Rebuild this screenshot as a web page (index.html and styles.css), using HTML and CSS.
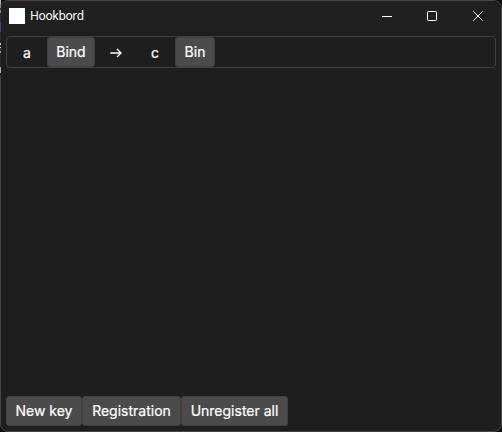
FILE: index.html
```html
<!DOCTYPE html>
<html lang="en">
<head>
<meta charset="utf-8">
<title>Hookbord</title>
<link rel="stylesheet" href="styles.css">
</head>
<body>
<div class="window">
  <header class="titlebar">
    <span class="app-icon"></span>
    <span class="title">Hookbord</span>
    <div class="controls">
      <svg width="10" height="10" viewBox="0 0 10 10"><path d="M0 5.5H10"/></svg>
      <svg width="10" height="10" viewBox="0 0 10 10"><rect x=".5" y=".5" width="9" height="9" rx=".8"/></svg>
      <svg width="10" height="10" viewBox="0 0 10 10"><path d="M.3 .3L9.7 9.7M9.7 .3L.3 9.7"/></svg>
    </div>
  </header>
  <main class="bindings">
    <div class="binding">
      <span class="key">a</span>
      <button class="btn">Bind</button>
      <svg class="arrow" width="12" height="10" viewBox="0 0 12 10"><path d="M.3 5H11M7 1L11 5L7 9"/></svg>
      <span class="key">c</span>
      <button class="btn btn-clipped">Bin</button>
    </div>
  </main>
  <footer class="actions">
    <button class="btn new-key">New key</button>
    <button class="btn registration">Registration</button>
    <button class="btn unregister">Unregister all</button>
  </footer>
</div>
<div class="desktop-edge"></div>
</body>
</html>
```
FILE: styles.css
```css
* { box-sizing: border-box; }
body { margin: 0; background: #101010; overflow: hidden; }
.window {
  width: 502px;
  height: 432px;
  display: flex;
  flex-direction: column;
  border: 1px solid #454545;
  border-radius: 8px;
  background: #1e1e1e;
  color: #fff;
  font: 14px/20px Inter, sans-serif;
  overflow: hidden;
}
/* sliver of the desktop behind the window's left edge */
.desktop-edge {
  position: absolute;
  left: 0;
  top: 0;
  width: 1px;
  height: 76px;
  background: linear-gradient(#d8b070 0 4px, #5a8fc0 4px 8px, #333 8px 10px, #b8784a 10px 13px, #333 13px 23px, #45408a 23px 32px, #2a2a2a 32px 43px, #ccc 43px 45px, #333 45px 47px, #ccc 47px 48px, #333 48px 51px, #b88 51px 53px, #2a2a2a 53px 67px, #6fb0d0 67px 70px, #d8b878 70px 73px, #2a2a2a 73px);
}
.titlebar {
  height: 30px;
  display: flex;
  align-items: center;
  padding: 0 18px 0 8px;
  background: #202020;
}
.app-icon { width: 16px; height: 16px; background: #fff; }
.title { margin-left: 5px; font: 12px/16px "Noto Sans", sans-serif; letter-spacing: -0.35px; }
.controls { margin-left: auto; display: flex; }
.controls svg + svg { margin-left: 35px; }
.controls svg:last-child { margin-left: 36px; }
svg { display: block; fill: none; stroke: #fff; stroke-width: 1; }
.bindings { flex: 1; padding: 5px 5px 0; }
.binding {
  height: 32px;
  display: flex;
  align-items: center;
  border: 1px solid #404040;
  border-radius: 4px;
}
.key { width: 40px; text-align: center; padding-top: 1px; }
.arrow { margin: 2px 13px 0 15px; stroke-width: 1.4; }
.key, .btn { -webkit-text-stroke: 0.2px #fff; }
.btn {
  height: 30px;
  width: 48px;
  padding: 0;
  border: 1px solid #414141;
  border-radius: 3px;
  background: #4b4b4b;
  color: #fff;
  font: inherit;
  white-space: nowrap;
}
.btn-clipped { width: 40px; }
.actions { display: flex; padding: 0 5px 5px; }
.new-key { width: 76px; }
.registration { width: 99px; }
.unregister { width: 107px; }
```
